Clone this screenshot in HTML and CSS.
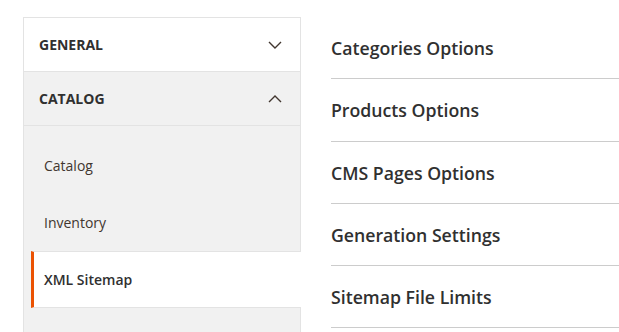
FILE: index.html
```html
<!DOCTYPE html>
<html lang="en">
<head>
  <meta charset="UTF-8">
  <title>Configuration - XML Sitemap</title>
  <link rel="stylesheet" href="styles.css">
</head>
<body>
  <div class="page">
    <!-- Config navigation -->
    <div class="config-nav">
      <div class="nav-block">
        <div class="nav-title">
          <span>General</span>
          <svg class="chevron" width="14" height="8" viewBox="0 0 14 8"><path d="M1 1l6 6 6-6" fill="none" stroke="#41362f" stroke-width="1.4"/></svg>
        </div>
      </div>
      <div class="nav-block open">
        <div class="nav-title">
          <span>Catalog</span>
          <svg class="chevron" width="14" height="8" viewBox="0 0 14 8"><path d="M1 7l6-6 6 6" fill="none" stroke="#41362f" stroke-width="1.4"/></svg>
        </div>
        <ul class="nav-items">
          <li class="nav-item">Catalog</li>
          <li class="nav-item">Inventory</li>
          <li class="nav-item active">XML Sitemap</li>
        </ul>
      </div>
    </div>

    <!-- Sections -->
    <div class="sections">
      <div class="section">Categories Options</div>
      <div class="section">Products Options</div>
      <div class="section">CMS Pages Options</div>
      <div class="section">Generation Settings</div>
      <div class="section">Sitemap File Limits</div>
    </div>
  </div>
</body>
</html>
```

FILE: styles.css
```css
html, body {
  margin: 0;
  padding: 0;
  background: #ffffff;
  overflow: hidden;
}

body {
  font-family: "Open Sans", Arial, sans-serif;
  color: #303030;
}

.page {
  display: flex;
  padding: 17px 0 0 23px;
  gap: 30px;
}

.config-nav {
  width: 276px;
  flex-shrink: 0;
  border: 1px solid #e3e3e3;
  border-bottom: none;
  background: #f1f1f1;
  height: 314px;
}

.nav-title {
  display: flex;
  align-items: center;
  justify-content: space-between;
  height: 53px;
  padding: 0 18px 0 15px;
  border-bottom: 1px solid #e3e3e3;
  font-size: 14px;
  font-weight: 700;
  text-transform: uppercase;
  color: #303030;
  background: #ffffff;
}

.nav-block.open .nav-title {
  background: #f1f1f1;
}

.nav-items {
  list-style: none;
  margin: 0;
  padding: 11px 0 0;
}

.nav-item {
  display: flex;
  align-items: center;
  height: 57px;
  padding-left: 20px;
  font-size: 14px;
  color: #41362f;
}

.nav-item.active {
  margin-left: 7px;
  margin-right: -1px;
  padding-left: 10px;
  height: 55px;
  background: #ffffff;
  border-top: 1px solid #e3e3e3;
  border-bottom: 1px solid #e3e3e3;
  border-left: 3px solid #eb5202;
  font-weight: 600;
  color: #303030;
}

.sections {
  flex: 1;
}

.section {
  height: 61px;
  display: flex;
  align-items: center;
  border-bottom: 1px solid #cccccc;
  font-size: 17.7px;
  font-weight: 600;
  color: #303030;
}

.section:nth-child(2) {
  height: 62px;
}
```
